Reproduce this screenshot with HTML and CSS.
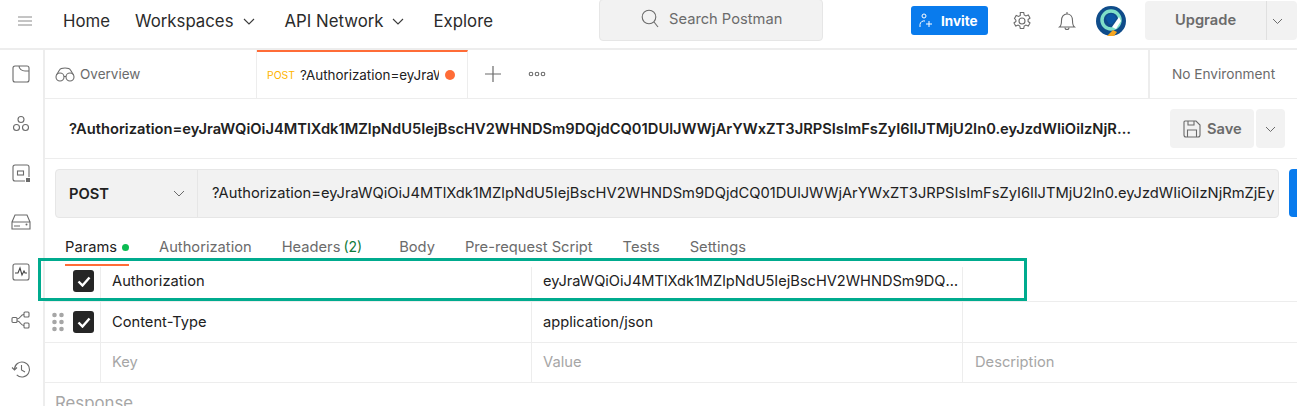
FILE: index.html
```html
<!DOCTYPE html>
<html lang="en">
<head>
<meta charset="utf-8">
<title>Postman</title>
<link rel="stylesheet" href="styles.css">
</head>
<body>
<div class="app">
  <header class="topbar">
    <svg class="menu-icon" width="16" height="10" viewBox="0 0 16 10"><path d="M1 1h14M1 5h14M1 9h14" stroke="#8a8a8a" stroke-width="1"/></svg>
    <nav class="nav">
      <span class="nav-item">Home</span>
      <span class="nav-item">Workspaces<svg class="nav-chev" width="12" height="7" viewBox="0 0 12 7"><path d="M1 1l5 5 5-5" fill="none" stroke="#3a3a3a" stroke-width="1.1"/></svg></span>
      <span class="nav-item">API Network<svg class="nav-chev" width="12" height="7" viewBox="0 0 12 7"><path d="M1 1l5 5 5-5" fill="none" stroke="#3a3a3a" stroke-width="1.1"/></svg></span>
      <span class="nav-item">Explore</span>
    </nav>
    <div class="search">
      <svg width="18" height="19" viewBox="0 0 18 19"><circle cx="8" cy="8" r="6.8" fill="none" stroke="#6b6b6b" stroke-width="1.1"/><path d="M13 13l4 5" stroke="#6b6b6b" stroke-width="1.1"/></svg>
      <span>Search Postman</span>
    </div>
    <div class="top-actions">
      <button class="invite">
        <svg width="14" height="15" viewBox="0 0 14 15"><circle cx="5" cy="3" r="2" fill="none" stroke="#fff"/><path d="M1 14v-2.500a4 4 0 0 1 5-3.500M10 8v6M7 11h6" fill="none" stroke="#fff"/></svg>
        <span>Invite</span>
      </button>
      <svg class="gear" width="20" height="20" viewBox="0 0 20 20"><path d="M8.300 1.500h3.400l.5 2.500 1.700.9 2.400-.9 1.700 3-1.900 1.600v1.800l1.900 1.600-1.700 3-2.400-.9-1.700.9-.5 2.500H8.300l-.5-2.500-1.700-.9-2.400.9-1.700-3 1.900-1.600V9.100L2.500 7.500l1.700-3 2.400.9 1.700-.9z" fill="none" stroke="#6b6b6b" stroke-width="1.100"/><circle cx="10" cy="10" r="3" fill="none" stroke="#6b6b6b" stroke-width="1.100"/></svg>
      <svg class="bell" width="18" height="20" viewBox="0 0 18 20"><path d="M1.500 16c2-1.500 2-3 2-6.500S5.500 3 9 3s5.500 3 5.500 6.500 0 5 2 6.500z" fill="none" stroke="#6b6b6b" stroke-width="1.100"/><path d="M9 1v2M7 16.500a2 2 0 0 0 4 0" fill="none" stroke="#6b6b6b" stroke-width="1.100"/></svg>
      <svg class="avatar" width="30" height="30" viewBox="0 0 30 30"><circle cx="15" cy="15" r="15" fill="#0f4c8a"/><circle cx="15" cy="14" r="9" fill="none" stroke="#7fe0c8" stroke-width="3.500"/><path d="M10 13a5 5 0 0 1 10 0l-4 5h-3z" fill="#0b57a4"/><path d="M16 21l7-10 2 4-5 8z" fill="#fff"/><path d="M11 30l6-6 4 2-3 4z" fill="#f5a623"/></svg>
      <div class="upgrade"><span class="upgrade-label">Upgrade</span><span class="upgrade-menu"><svg width="11" height="6" viewBox="0 0 11 6"><path d="M1 1l4.500 4.500L10 1" fill="none" stroke="#6b6b6b"/></svg></span></div>
    </div>
  </header>
  <div class="main">
    <aside class="sidebar">
      <svg width="18" height="18" viewBox="0 0 18 18"><path d="M3 1h12a2 2 0 0 1 2 2v12a2 2 0 0 1-2 2H3a2 2 0 0 1-2-2V3a2 2 0 0 1 2-2zM7 1c0 3 3 5 6 5h4" fill="none" stroke="#6b6b6b" stroke-width="1.100"/></svg>
      <svg width="18" height="18" viewBox="0 0 18 18"><g fill="none" stroke="#6b6b6b" stroke-width="1.100"><circle cx="9" cy="4.500" r="3"/><circle cx="4.500" cy="12.500" r="3"/><circle cx="13.500" cy="12.500" r="3"/></g></svg>
      <svg width="18" height="18" viewBox="0 0 18 18"><path d="M13 17H3a2 2 0 0 1-2-2V3a2 2 0 0 1 2-2h12a2 2 0 0 1 2 2v10" fill="none" stroke="#6b6b6b" stroke-width="1.100"/><rect x="5.500" y="7" width="6" height="4" fill="none" stroke="#6b6b6b" stroke-width="1.100"/><rect x="14" y="14" width="4" height="4" fill="#6b6b6b"/></svg>
      <svg width="20" height="16" viewBox="0 0 20 16"><path d="M1 8l3-7h12l3 7M1 8h18v7H1z" fill="none" stroke="#6b6b6b" stroke-width="1.100"/><path d="M4 11v2M6 11v2M8 11v2" stroke="#6b6b6b"/><circle cx="15.500" cy="10.500" r="1" fill="#6b6b6b"/></svg>
      <svg width="18" height="18" viewBox="0 0 18 18"><rect x="1" y="1" width="16" height="16" rx="2" fill="none" stroke="#6b6b6b" stroke-width="1.100"/><path d="M3 10l3 0 2-5 2 7 2-4 1 2h2" fill="none" stroke="#444" stroke-width="1.100"/></svg>
      <svg width="20" height="18" viewBox="0 0 20 18"><g fill="none" stroke="#6b6b6b" stroke-width="1.100"><rect x="1" y="6.500" width="5" height="5" rx="1"/><rect x="13" y="1" width="5" height="5" rx="1"/><rect x="13" y="12" width="5" height="5" rx="1"/><path d="M6 8c4 0 3-4.500 7-4.500M6 10c4 0 3 4.500 7 4.500"/></g></svg>
      <svg width="20" height="19" viewBox="0 0 20 19"><g fill="none" stroke="#6b6b6b" stroke-width="1.100"><path d="M3.500 9.500a7.500 7.500 0 1 1 2.200 5.300"/><path d="M1 7.500l2.500 2.500 2.500-2.500M10.500 5v5l3.500 2"/></g></svg>
    </aside>
    <section class="content">
      <div class="tabs">
        <div class="tab overview">
          <svg width="20" height="15" viewBox="0 0 20 15"><g fill="none" stroke="#6b6b6b" stroke-width="1.100"><circle cx="5" cy="10" r="4"/><circle cx="15" cy="10" r="4"/><path d="M1.500 8l3-5c1-2 3-2 5.500-2s4.500 0 5.500 2l3 5M9 9.500h2"/></g></svg>
          <span>Overview</span>
        </div>
        <div class="tab active">
          <span class="tab-method">POST</span>
          <span class="tab-name">?Authorization=eyJraWQiOiJ4MTlXdk1MZlpNdU5IejBsc</span>
          <span class="tab-dot"></span>
        </div>
        <svg class="tab-plus" width="16" height="16" viewBox="0 0 16 16"><path d="M8 0v16M0 8h16" stroke="#6b6b6b" stroke-width="1.200"/></svg>
        <svg class="tab-more" width="18" height="6" viewBox="0 0 18 6"><g fill="none" stroke="#6b6b6b" stroke-width="1.100"><circle cx="3" cy="3" r="1.800"/><circle cx="9" cy="3" r="1.800"/><circle cx="15" cy="3" r="1.800"/></g></svg>
        <div class="env">No Environment</div>
      </div>
      <div class="title-row">
        <div class="title">?Authorization=eyJraWQiOiJ4MTlXdk1MZlpNdU5IejBscHV2WHNDSm9DQjdCQ01DUlJWWjArYWxZT3JRPSIsImFsZyI6IlJTMjU2In0.eyJzdWIiOiIzNjRmZjEyNzYtYjA3Zi00</div>
        <button class="save">
          <svg width="18" height="18" viewBox="0 0 18 18"><path d="M2 1h11l4 4v10a2 2 0 0 1-2 2H3a2 2 0 0 1-2-2V2a1 1 0 0 1 1-1zM5 1v4h6V1M4.500 17v-7h9v7" fill="none" stroke="#6b6b6b" stroke-width="1.100"/></svg>
          <span>Save</span>
        </button>
        <button class="save-menu"><svg width="11" height="6" viewBox="0 0 11 6"><path d="M1 1l4.500 4.500L10 1" fill="none" stroke="#6b6b6b"/></svg></button>
      </div>
      <div class="url-row">
        <div class="url-box">
          <div class="method"><span>POST</span><svg width="12" height="7" viewBox="0 0 12 7"><path d="M1 1l5 5 5-5" fill="none" stroke="#6b6b6b"/></svg></div>
          <div class="url-text">?Authorization=eyJraWQiOiJ4MTlXdk1MZlpNdU5IejBscHV2WHNDSm9DQjdCQ01DUlJWWjArYWxZT3JRPSIsImFsZyI6IlJTMjU2In0.eyJzdWIiOiIzNjRmZjEy</div>
        </div>
        <div class="send"></div>
      </div>
      <div class="req-tabs">
        <span class="req-tab on">Params<i class="green-dot"></i></span>
        <span class="req-tab">Authorization</span>
        <span class="req-tab headers">Headers<em>(2)</em></span>
        <span class="req-tab">Body</span>
        <span class="req-tab">Pre-request Script</span>
        <span class="req-tab">Tests</span>
        <span class="req-tab">Settings</span>
      </div>
      <div class="params">
        <div class="row row-first">
          <div class="cell c-check"><span class="check"><svg width="14" height="11" viewBox="0 0 14 11"><path d="M1.500 5.500l4 4 7-8" fill="none" stroke="#fff" stroke-width="2.400"/></svg></span></div>
          <div class="cell c-key">Authorization</div>
          <div class="cell c-val">eyJraWQiOiJ4MTlXdk1MZlpNdU5IejBscHV2WHNDSm9DQjdCQ01DUlJWWjArYWxZ</div>
          <div class="cell c-desc"></div>
        </div>
        <div class="row">
          <div class="cell c-check">
            <svg class="grip" width="12" height="20" viewBox="0 0 12 20"><g fill="#a6a6a6"><circle cx="2.500" cy="3" r="2.300"/><circle cx="9.500" cy="3" r="2.300"/><circle cx="2.500" cy="10" r="2.300"/><circle cx="9.500" cy="10" r="2.300"/><circle cx="2.500" cy="17" r="2.300"/><circle cx="9.500" cy="17" r="2.300"/></g></svg>
            <span class="check"><svg width="14" height="11" viewBox="0 0 14 11"><path d="M1.500 5.500l4 4 7-8" fill="none" stroke="#fff" stroke-width="2.400"/></svg></span>
          </div>
          <div class="cell c-key">Content-Type</div>
          <div class="cell c-val">application/json</div>
          <div class="cell c-desc"></div>
        </div>
        <div class="row row-new">
          <div class="cell c-check"></div>
          <div class="cell c-key ph">Key</div>
          <div class="cell c-val ph">Value</div>
          <div class="cell c-desc ph">Description</div>
        </div>
      </div>
      <div class="response">Response</div>
    </section>
  </div>
  <div class="highlight"></div>
</div>
</body>
</html>
```
FILE: styles.css
```css
* { box-sizing: border-box; }
html, body { margin: 0; padding: 0; height: 406px; overflow: hidden; background: #fff; }
body { font-family: Inter, "Liberation Sans", sans-serif; font-size: 14.7px; color: #212121; }
svg { display: block; flex: none; }
button { font-family: inherit; border: 0; padding: 0; }

.app { position: relative; width: 1297px; height: 406px; overflow: hidden; }

.topbar { display: flex; align-items: flex-start; height: 50px; border-bottom: 2px solid #ededed; padding-left: 17px; }
.menu-icon { margin-top: 16px; }
.nav { display: flex; gap: 24px; margin-left: 30px; width: 536px; font-size: 16.8px; line-height: 20px; padding-top: 11px; color: #2b2b2b; }
.nav-item { display: flex; align-items: center; white-space: nowrap; }
.nav-chev { margin-left: 9px; }
.nav-item:nth-child(2) { margin-left: 1px; }
.nav-item:nth-child(3) { margin-left: 6px; }
.nav-item:nth-child(4) { margin-left: 5px; }
.search { display: flex; align-items: center; gap: 10px; width: 224px; height: 42px; margin-top: -1px; padding: 0 0 3px 41px; background: #f2f2f2; border: 1px solid #e6e6e6; border-radius: 4px; color: #6b6b6b; font-size: 14.7px; }
.top-actions { display: flex; align-items: flex-start; flex: 1; margin-left: 88px; }
.invite { display: flex; align-items: center; gap: 8px; width: 77px; height: 29px; margin-top: 6px; padding-left: 8px; background: #097bed; color: #fff; border-radius: 3px; font-weight: 700; font-size: 13.5px; }
.gear { margin: 11px 0 0 24px; }
.bell { margin: 11px 0 0 26px; }
.avatar { margin: 6px 0 0 20px; }
.upgrade { display: flex; height: 39px; margin: 1px 0 0 19px; width: 152px; background: #f2f2f2; border-radius: 4px; color: #6b6b6b; font-weight: 600; font-size: 14.7px; }
.upgrade-label { display: flex; align-items: center; justify-content: center; width: 122px; padding-bottom: 1px; border-right: 1px solid #e0e0e0; }
.upgrade-menu { display: flex; align-items: center; padding-left: 5px; }

.main { display: flex; height: 356px; }
.sidebar { display: flex; flex-direction: column; align-items: center; width: 45px; flex: none; border-right: 2px solid #ededed; padding: 15px 2px 0 0; }
.sidebar svg:nth-child(1) { margin-bottom: 32px; }
.sidebar svg:nth-child(2) { margin-bottom: 31px; }
.sidebar svg:nth-child(3) { margin-bottom: 32px; }
.sidebar svg:nth-child(4) { margin-bottom: 33px; }
.sidebar svg:nth-child(5) { margin-bottom: 30px; }
.sidebar svg:nth-child(6) { margin-bottom: 31px; }

.content { flex: 1; min-width: 0; }
.tabs { display: flex; align-items: center; height: 49px; border-bottom: 1px solid #ededed; }
.tab { display: flex; align-items: center; height: 48px; width: 212px; border-right: 1px solid #ededed; font-size: 13.5px; color: #6b6b6b; }
.overview { gap: 5px; padding-left: 10px; }
.active { width: 211px; border-top: 2px solid #ff6c37; padding: 0 12px 0 10px; color: #212121; font-size: 13.4px; }
.tab-method { color: #ffb400; font-size: 10.4px; margin-right: 5px; }
.tab-name { width: 139px; overflow: hidden; white-space: nowrap; }
.tab-dot { width: 10px; height: 10px; margin-left: 6px; border-radius: 50%; background: #ff6c37; }
.tab-plus { margin-left: 17px; }
.tab-more { margin-left: 27px; }
.env { width: 149px; height: 48px; margin-left: auto; line-height: 48px; text-align: center; border-left: 2px solid #ededed; font-size: 13.7px; color: #6b6b6b; }

.title-row { display: flex; align-items: center; height: 60px; padding: 0 12px 0 24px; border-bottom: 1px solid #ededed; }
.title { width: 1066px; margin-right: 35px; overflow: hidden; white-space: nowrap; text-overflow: ellipsis; font-weight: 600; font-size: 14.7px; color: #212121; }
.save { display: flex; align-items: center; gap: 6px; width: 84px; height: 39px; padding-left: 13px; background: #f2f2f2; border-radius: 4px; color: #6b6b6b; font-weight: 600; font-size: 14.7px; }
.save-menu { display: flex; align-items: center; justify-content: center; width: 29px; height: 39px; margin-left: 2px; background: #f2f2f2; border-radius: 4px; }

.url-row { display: flex; gap: 10px; height: 49px; margin-top: 10px; padding-left: 10px; }
.url-box { display: flex; width: 1224px; flex: none; height: 49px; background: #f2f2f2; border: 1px solid #e6e6e6; border-radius: 4px; }
.method { display: flex; align-items: center; justify-content: space-between; width: 142px; flex: none; padding: 0 12px 0 13px; border-right: 1px solid #e6e6e6; font-weight: 600; font-size: 14.7px; color: #212121; }
.url-text { flex: 1; min-width: 0; padding: 0 10px 0 14px; line-height: 47px; overflow: hidden; white-space: nowrap; font-size: 14.7px; color: #212121; }
.send { width: 40px; flex: none; height: 48px; background: #097bed; border-radius: 4px; }

.req-tabs { position: relative; z-index: 1; display: flex; gap: 30px; height: 25px; margin-top: 17px; padding-left: 20px; color: #6b6b6b; font-size: 14.7px; line-height: 24px; }
.req-tab { position: relative; display: flex; white-space: pre; }
.req-tab em { margin-left: 3px; font-style: normal; font-size: 14px; color: #0f7a3a; }
.req-tab.headers { margin-right: 7px; }
.req-tab.on { color: #212121; }
.req-tab.on::after { content: ""; position: absolute; left: 0; right: 0; top: 29px; height: 2px; background: #ff6c37; }
.green-dot { width: 7px; height: 7px; margin: 9px 0 0 5px; border-radius: 50%; background: #0cbb52; }

.params { margin-top: 1px; }
.row { display: flex; height: 41px; border-bottom: 1px solid #ededed; }
.row-first .cell { margin-top: 6px; padding-bottom: 6px; }
.row-new { height: 40px; }
.row-new .cell { padding-bottom: 1px; }
.cell { display: flex; align-items: center; border-right: 1px solid #ededed; font-size: 14.7px; color: #212121; }
.cell.ph { color: #a6a6a6; }
.c-check { position: relative; justify-content: flex-end; width: 56px; padding-right: 6px; }
.grip { position: absolute; left: 7px; top: 10px; }
.c-key { width: 431px; padding-left: 11px; }
.c-val { display: block; width: 431px; min-width: 0; padding: 0 0 0 11px; line-height: 40px; overflow: hidden; white-space: nowrap; text-overflow: ellipsis; }
.row-first .c-val { padding: 0 4px 0 11px; line-height: 28px; font-size: 14.6px; }
.row-new .c-val { padding-bottom: 0; line-height: 38px; }
.c-desc { flex: 1; padding-left: 12px; border-right: 0; }
.check { display: flex; align-items: center; justify-content: center; width: 21px; height: 22px; background: #262626; border-radius: 3px; }

.response { padding: 10px 0 0 10px; font-size: 16.8px; color: #a6a6a6; }

.highlight { position: absolute; left: 38px; top: 258px; width: 989px; height: 43px; border: 3px solid #00ab8e; }
```
